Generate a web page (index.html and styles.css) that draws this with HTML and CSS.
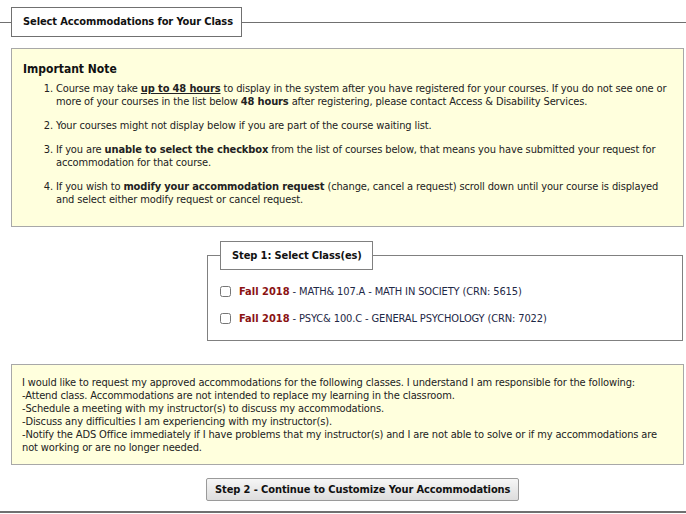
FILE: index.html
```html
<!DOCTYPE html>
<html>
<head>
<meta charset="utf-8">
<link rel="stylesheet" href="styles.css">
</head>
<body>
<fieldset class="main">
  <legend class="main-legend">Select Accommodations for Your Class</legend>
  <div class="note-box">
    <div class="note-title">Important Note</div>
    <ol class="note-list">
      <li>Course may take <b><u>up to 48 hours</u></b> to display in the system after you have registered for your courses. If you do not see one or more of your courses in the list below <b>48 hours</b> after registering, please contact Access &amp; Disability Services.</li>
      <li>Your courses might not display below if you are part of the course waiting list.</li>
      <li>If you are <b>unable to select the checkbox</b> from the list of courses below, that means you have submitted your request for accommodation for that course.</li>
      <li>If you wish to <b>modify your accommodation request</b> (change, cancel a request) scroll down until your course is displayed and select either modify request or cancel request.</li>
    </ol>
  </div>
  <fieldset class="step">
    <legend class="step-legend">Step 1: Select Class(es)</legend>
    <label class="course"><input type="checkbox" class="cb"><span class="term">Fall 2018</span><span class="cname"> - MATH&amp; 107.A - MATH IN SOCIETY (CRN: 5615)</span></label>
    <label class="course"><input type="checkbox" class="cb"><span class="term">Fall 2018</span><span class="cname"> - PSYC&amp; 100.C - GENERAL PSYCHOLOGY (CRN: 7022)</span></label>
  </fieldset>
  <div class="agree-box">I would like to request my approved accommodations for the following classes. I understand I am responsible for the following:<br>-Attend class. Accommodations are not intended to replace my learning in the classroom.<br>-Schedule a meeting with my instructor(s) to discuss my accommodations.<br>-Discuss any difficulties I am experiencing with my instructor(s).<br>-Notify the ADS Office immediately if I have problems that my instructor(s) and I are not able to solve or if my accommodations are not working or are no longer needed.</div>
  <div class="actions"><button class="btn" type="button">Step 2 - Continue to Customize Your Accommodations</button></div>
</fieldset>
<div class="rule"></div>
</body>
</html>
```

FILE: styles.css
```css
html, body {
  margin: 0;
  padding: 0;
  background: #fff;
}
body {
  font-family: Tahoma, "DejaVu Sans Condensed", "DejaVu Sans", sans-serif;
  font-size: 11px;
  letter-spacing: -0.13px;
  color: #222;
  width: 686px;
  height: 514px;
  overflow: hidden;
}
.main {
  margin: 7px 0 0 0;
  padding: 11px 2px 0 11px;
  border: none;
  border-top: 1px solid #707070;
  min-width: 0;
}
.main-legend {
  margin: 0;
  padding: 7px 8px 7px 11px;
  border: 1px solid #707070;
  font-weight: bold;
  font-size: 11px;
  line-height: 14px;
  letter-spacing: -0.1px;
  color: #111;
}
.note-box {
  background: #ffffdd;
  border: 1px solid #a8a8a8;
  padding: 13px 10px 9px 11px;
}
.note-title {
  font-weight: bold;
  font-size: 12px;
  line-height: 14px;
  letter-spacing: 0;
  color: #111;
  margin-bottom: 6px;
}
.note-list {
  margin: 0;
  padding-left: 33px;
  line-height: 13px;
}
.note-list li {
  margin-bottom: 11px;
}
.step {
  margin: 14px 1px 0 196px;
  padding: 8px 12px 8px 12px;
  border: 1px solid #808080;
  min-width: 0;
}
.step-legend {
  margin: 0;
  padding: 7px 10px 6px 11px;
  border: 1px solid #808080;
  font-weight: bold;
  font-size: 11px;
  line-height: 14px;
  letter-spacing: -0.1px;
  color: #111;
}
.course {
  display: flex;
  align-items: center;
  height: 27px;
  font-size: 11px;
}
.cb {
  width: 11px;
  height: 11px;
  margin: 0 8px 0 0;
  accent-color: #888;
}
.term {
  color: #8b1212;
  font-weight: bold;
  letter-spacing: 0;
}
.cname {
  color: #1e2846;
  white-space: pre;
}
.agree-box {
  margin-top: 23px;
  background: #ffffdd;
  border: 1px solid #a8a8a8;
  padding: 11px 10px 10px 10px;
  line-height: 13px;
}
.actions {
  padding: 13px 0 10px 195px;
}
.btn {
  font-family: inherit;
  font-weight: bold;
  font-size: 11px;
  letter-spacing: -0.1px;
  color: #111;
  height: 23px;
  padding: 0 8px;
  border: 1px solid #9a9a9a;
  border-radius: 2px;
  background: linear-gradient(#f6f6f6, #dddddd);
}
.rule {
  height: 2px;
  background: #707070;
  margin: 0;
}
```
